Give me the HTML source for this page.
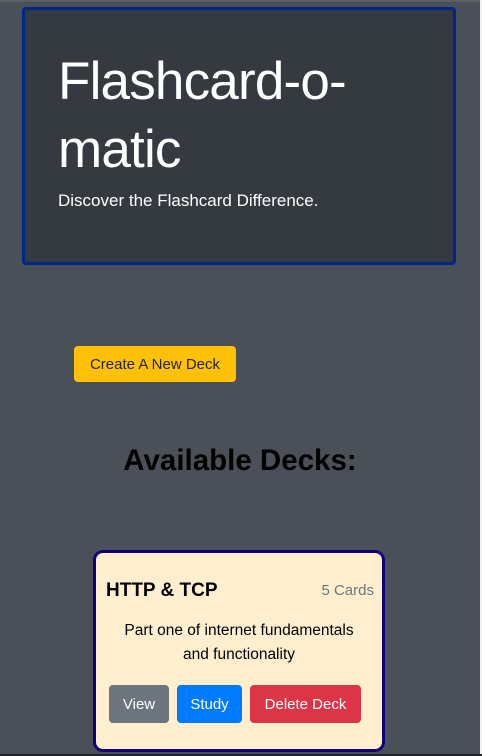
<!DOCTYPE html>
<html><head><style>
body{margin:0;width:482px;height:756px;background:#495057;font-family:"Liberation Sans",sans-serif;position:relative;overflow:hidden}
.top{position:absolute;left:0;top:0;width:482px;height:2px;background:#5a5f66}
.right{position:absolute;right:0;top:0;width:2px;height:756px;background:#f0f0f0}
.bot{position:absolute;left:0;bottom:0;width:482px;height:2px;background:#222}
.jumbo{position:absolute;left:22px;top:7px;width:428px;height:252px;background:#343a40;border:3px solid #00268a;border-radius:4px}
.jumbo h1{position:absolute;left:33px;top:38px;margin:0;font-weight:300;font-size:53px;line-height:68px;color:#fff;letter-spacing:-0.8px}
.jumbo p{position:absolute;left:33px;top:181px;margin:0;font-size:17px;color:#fff;font-weight:300}
.create{position:absolute;left:74px;top:346px;width:162px;height:36px;background:#ffc107;border-radius:4px;color:#212529;font-size:15px;line-height:38px;text-align:center}
h2{position:absolute;left:0;width:480px;top:444px;margin:0;text-align:center;font-size:29.5px;font-weight:bold;color:#000}
.card{position:absolute;left:93px;top:550px;width:286px;height:196px;background:#ffefcf;border:3px solid #12007a;border-radius:10px}
.t{position:absolute;left:10px;top:27px;font-size:19px;font-weight:bold;color:#000}
.c{position:absolute;right:8px;top:29px;font-size:15px;color:#6c757d}
.d{position:absolute;left:0;width:286px;top:66px;text-align:center;font-size:15.5px;line-height:24px;color:#000}
.b{position:absolute;top:132px;height:38px;line-height:40px;color:#fff;font-size:15px;text-align:center;border-radius:4px}
</style></head><body>
<div class="top"></div><div class="right"></div><div class="bot"></div>
<div class="jumbo"><h1>Flashcard-o-<br>matic</h1><p>Discover the Flashcard Difference.</p></div>
<div class="create">Create A New Deck</div>
<h2>Available Decks:</h2>
<div class="card">
<div class="t">HTTP &amp; TCP</div><div class="c">5 Cards</div>
<div class="d">Part one of internet fundamentals<br>and functionality</div>
<div class="b" style="left:13px;width:60px;background:#6c757d">View</div>
<div class="b" style="left:81px;width:65px;background:#007bff">Study</div>
<div class="b" style="left:154px;width:111px;background:#dc3545">Delete Deck</div>
</div>
</body></html>
